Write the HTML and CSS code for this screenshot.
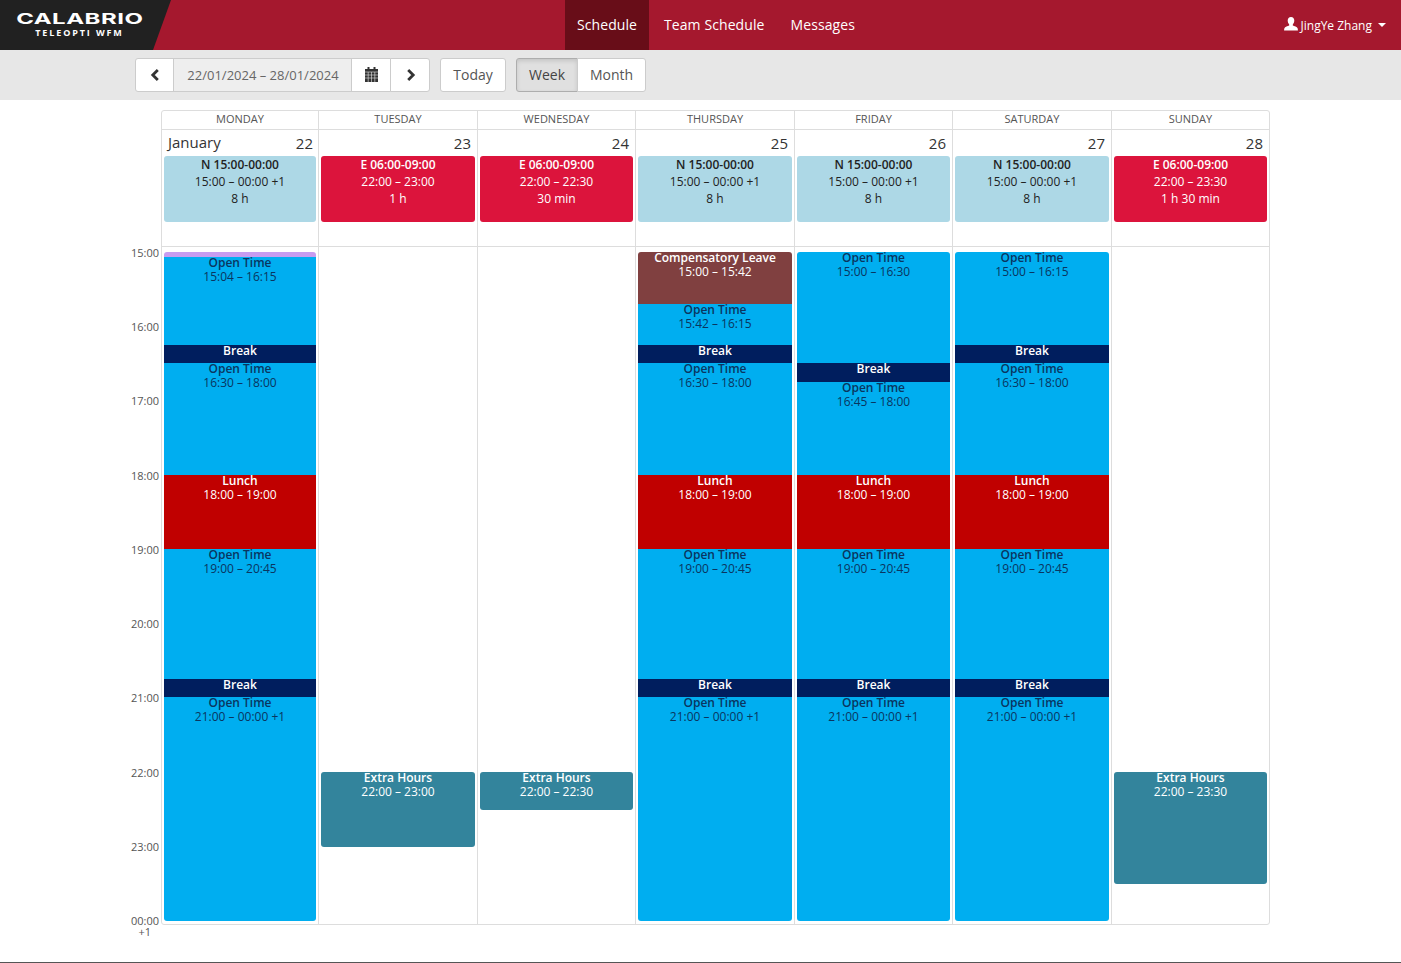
FILE: index.html
```html
<!DOCTYPE html>
<html lang="en">
<head>
<meta charset="utf-8">
<title>Schedule</title>
<link rel="stylesheet" href="styles.css">
</head>
<body>
<header class="navbar">
  <a class="brand"><span class="brand-main">CALABRIO</span><span class="brand-sub">TELEOPTI WFM</span></a>
  <nav class="nav">
    <a class="nav-item active">Schedule</a>
    <a class="nav-item">Team Schedule</a>
    <a class="nav-item">Messages</a>
  </nav>
  <a class="user">
    <svg class="user-icon" viewBox="0 0 14 14"><path d="M7 0C4.900 0 3.700 1.500 3.700 3.600c0 1.500.6 3 1.500 3.800v1.100C3.800 9.300.9 9.800.4 11.200c-.2.700-.3 1.500-.3 2.300h13.800c0-.8-.1-1.600-.3-2.300-.5-1.400-3.400-1.900-4.800-2.700V7.400c.9-.8 1.500-2.300 1.500-3.800C10.300 1.500 9.100 0 7 0z"/></svg>
    <span>JingYe Zhang</span><i class="caret"></i>
  </a>
</header>

<section class="toolbar">
  <div class="btn-group">
    <button class="btn btn-icon first"><svg class="icon" viewBox="0 0 10 12"><path d="M7.800 1 2.800 6l5 5" /></svg></button>
    <span class="btn range">22/01/2024 – 28/01/2024</span>
    <button class="btn btn-icon"><svg class="icon-cal" viewBox="0 0 13 15"><path class="cal-body" d="M2.500 0h2v2h4V0h2v2H13v13H0V2h2.500z"/><path class="cal-lines" d="M0 5h13M0 8h13M0 11h13M3.200 5v10M6.500 5v10M9.800 5v10"/></svg></button>
    <button class="btn btn-icon"><svg class="icon next" viewBox="0 0 10 12"><path d="M2.200 1l5 5-5 5" /></svg></button>
  </div>
  <button class="btn today">Today</button>
  <div class="btn-group">
    <button class="btn pressed">Week</button>
    <button class="btn">Month</button>
  </div>
</section>

<main class="calendar">
  <div class="axis">
    <span class="tick">15:00</span><span class="tick">16:00</span><span class="tick">17:00</span><span class="tick">18:00</span><span class="tick">19:00</span><span class="tick">20:00</span><span class="tick">21:00</span><span class="tick">22:00</span><span class="tick">23:00</span><span class="tick last">00:00<small>+1</small></span>
  </div>
  <div class="table">
    <section class="day">
      <div class="day-head">MONDAY</div>
      <div class="day-date">
        <div class="date-line"><span class="month">January</span><span>22</span></div>
        <div class="shift light"><b>N 15:00-00:00</b><span>15:00 – 00:00 +1</span><span>8 h</span></div>
      </div>
      <div class="day-body"><div class="stack">
        <div class="ev purple" style="height:5px"></div>
        <div class="ev open" style="height:88px"><b>Open Time</b><span>15:04 – 16:15</span></div>
        <div class="ev brk" style="height:18px"><b>Break</b></div>
        <div class="ev open" style="height:112px"><b>Open Time</b><span>16:30 – 18:00</span></div>
        <div class="ev lunch" style="height:74px"><b>Lunch</b><span>18:00 – 19:00</span></div>
        <div class="ev open" style="height:130px"><b>Open Time</b><span>19:00 – 20:45</span></div>
        <div class="ev brk" style="height:18px"><b>Break</b></div>
        <div class="ev open" style="height:224px"><b>Open Time</b><span>21:00 – 00:00 +1</span></div>
      </div></div>
    </section>
    <section class="day">
      <div class="day-head">TUESDAY</div>
      <div class="day-date">
        <div class="date-line end"><span>23</span></div>
        <div class="shift crimson"><b>E 06:00-09:00</b><span>22:00 – 23:00</span><span>1 h</span></div>
      </div>
      <div class="day-body"><div class="stack">
        <div class="gap" style="height:520px"></div>
        <div class="ev extra" style="height:75px"><b>Extra Hours</b><span>22:00 – 23:00</span></div>
      </div></div>
    </section>
    <section class="day">
      <div class="day-head">WEDNESDAY</div>
      <div class="day-date">
        <div class="date-line end"><span>24</span></div>
        <div class="shift crimson"><b>E 06:00-09:00</b><span>22:00 – 22:30</span><span>30 min</span></div>
      </div>
      <div class="day-body"><div class="stack">
        <div class="gap" style="height:520px"></div>
        <div class="ev extra" style="height:38px"><b>Extra Hours</b><span>22:00 – 22:30</span></div>
      </div></div>
    </section>
    <section class="day">
      <div class="day-head">THURSDAY</div>
      <div class="day-date">
        <div class="date-line end"><span>25</span></div>
        <div class="shift light"><b>N 15:00-00:00</b><span>15:00 – 00:00 +1</span><span>8 h</span></div>
      </div>
      <div class="day-body"><div class="stack">
        <div class="ev comp" style="height:52px"><b>Compensatory Leave</b><span>15:00 – 15:42</span></div>
        <div class="ev open" style="height:41px"><b>Open Time</b><span>15:42 – 16:15</span></div>
        <div class="ev brk" style="height:18px"><b>Break</b></div>
        <div class="ev open" style="height:112px"><b>Open Time</b><span>16:30 – 18:00</span></div>
        <div class="ev lunch" style="height:74px"><b>Lunch</b><span>18:00 – 19:00</span></div>
        <div class="ev open" style="height:130px"><b>Open Time</b><span>19:00 – 20:45</span></div>
        <div class="ev brk" style="height:18px"><b>Break</b></div>
        <div class="ev open" style="height:224px"><b>Open Time</b><span>21:00 – 00:00 +1</span></div>
      </div></div>
    </section>
    <section class="day">
      <div class="day-head">FRIDAY</div>
      <div class="day-date">
        <div class="date-line end"><span>26</span></div>
        <div class="shift light"><b>N 15:00-00:00</b><span>15:00 – 00:00 +1</span><span>8 h</span></div>
      </div>
      <div class="day-body"><div class="stack">
        <div class="ev open" style="height:111px"><b>Open Time</b><span>15:00 – 16:30</span></div>
        <div class="ev brk" style="height:19px"><b>Break</b></div>
        <div class="ev open" style="height:93px"><b>Open Time</b><span>16:45 – 18:00</span></div>
        <div class="ev lunch" style="height:74px"><b>Lunch</b><span>18:00 – 19:00</span></div>
        <div class="ev open" style="height:130px"><b>Open Time</b><span>19:00 – 20:45</span></div>
        <div class="ev brk" style="height:18px"><b>Break</b></div>
        <div class="ev open" style="height:224px"><b>Open Time</b><span>21:00 – 00:00 +1</span></div>
      </div></div>
    </section>
    <section class="day">
      <div class="day-head">SATURDAY</div>
      <div class="day-date">
        <div class="date-line end"><span>27</span></div>
        <div class="shift light"><b>N 15:00-00:00</b><span>15:00 – 00:00 +1</span><span>8 h</span></div>
      </div>
      <div class="day-body"><div class="stack">
        <div class="ev open" style="height:93px"><b>Open Time</b><span>15:00 – 16:15</span></div>
        <div class="ev brk" style="height:18px"><b>Break</b></div>
        <div class="ev open" style="height:112px"><b>Open Time</b><span>16:30 – 18:00</span></div>
        <div class="ev lunch" style="height:74px"><b>Lunch</b><span>18:00 – 19:00</span></div>
        <div class="ev open" style="height:130px"><b>Open Time</b><span>19:00 – 20:45</span></div>
        <div class="ev brk" style="height:18px"><b>Break</b></div>
        <div class="ev open" style="height:224px"><b>Open Time</b><span>21:00 – 00:00 +1</span></div>
      </div></div>
    </section>
    <section class="day">
      <div class="day-head">SUNDAY</div>
      <div class="day-date">
        <div class="date-line end"><span>28</span></div>
        <div class="shift crimson"><b>E 06:00-09:00</b><span>22:00 – 23:30</span><span>1 h 30 min</span></div>
      </div>
      <div class="day-body"><div class="stack">
        <div class="gap" style="height:520px"></div>
        <div class="ev extra" style="height:112px"><b>Extra Hours</b><span>22:00 – 23:30</span></div>
      </div></div>
    </section>
  </div>
</main>
<footer class="foot"></footer>
</body>
</html>
```

FILE: styles.css
```css
* { box-sizing: border-box; }
html, body { margin: 0; padding: 0; height: 963px; overflow: hidden; background: #fff; }
body { font-family: "Open Sans", "Liberation Sans", sans-serif; font-size: 12px; color: #333; position: relative; }

.navbar { height: 50px; background: #a5182e; display: flex; align-items: stretch; color: #fff; }
.brand { width: 171px; background: #212121; clip-path: polygon(0 0, 100% 0, 153px 100%, 0 100%); display: flex; flex-direction: column; align-items: center; padding: 11px 12px 0 0; flex: none; }
.brand-main { font-family: Inter, sans-serif; font-weight: 700; font-size: 15px; line-height: 15px; letter-spacing: .3px; transform: scaleX(1.6); }
.brand-sub { font-family: "Open Sans", sans-serif; font-weight: 700; font-size: 9px; line-height: 12px; letter-spacing: 1.88px; margin-top: 1px; }
.nav { display: flex; margin-left: 394px; }
.nav-item { padding: 0 12px 0 14px; line-height: 50px; font-size: 14px; letter-spacing: .09px; }
.nav-item.active { background: #680d18; padding: 0; width: 84px; text-align: center; margin-right: 1px; }
.user { margin-left: auto; padding-right: 15px; display: flex; align-items: center; font-size: 12px; }
.user-icon { width: 14px; height: 14px; fill: #fff; margin: -3px 3px 0 0; }
.caret { display: block; border: 4px solid transparent; border-top-color: #fff; border-bottom: 0; margin-left: 6px; }

.toolbar { height: 50px; background: #e7e7e7; display: flex; align-items: flex-start; gap: 10px; padding: 8px 0 0 135px; }
.btn-group { display: flex; }
.btn { height: 34px; font-family: inherit; font-size: 14px; line-height: 32px; color: #555; background: #fff; border: 1px solid #ccc; border-radius: 3px; padding: 0 12px; margin: 0; display: block; }
.btn-group .btn { border-radius: 0; margin-left: -1px; }
.btn-group .btn:first-child { border-radius: 3px 0 0 3px; margin-left: 0; }
.btn-group .btn:last-child { border-radius: 0 3px 3px 0; }
.btn-icon { width: 40px; padding: 0; display: flex; align-items: center; justify-content: center; }
.btn-group .first { width: 39px; }
.range { background: #eee; font-size: 13px; width: 179px; text-align: center; padding: 0 0 0 1px; color: #666; }
.icon { width: 10px; height: 12px; fill: none; stroke: #333; stroke-width: 2.8; }
.next { margin-left: 1px; }
.icon-cal { width: 13px; height: 15px; margin-top: -1px; }
.cal-body { fill: #333; }
.cal-lines { fill: none; stroke: #e8e8e8; stroke-width: .6; }
.today { width: 66px; padding: 0; text-align: center; }
.pressed { background: #e0e0e0; box-shadow: inset 0 2px 4px rgba(0,0,0,.125); border-color: #adadad; color: #444; }

.calendar { display: flex; align-items: flex-start; margin-top: 10px; }
.axis { width: 161px; flex: none; padding-top: 135.9px; display: flex; flex-direction: column; align-items: flex-end; }
.tick { height: 74.25px; width: 100%; text-align: right; padding-right: 2px; font-size: 11px; line-height: 14px; color: #555; }
.tick small { display: block; font-size: 11px; line-height: 11px; padding-right: 8px; margin-top: -2px; }
.table { display: grid; grid-template-columns: 157px 159px 158px 159px 158px 159px 157px; border: 1px solid #ddd; border-radius: 3px; width: 1109px; flex: none; }
.day { border-right: 1px solid #ddd; }
.day:last-child { border-right: 0; }
.day-head { height: 19px; border-bottom: 1px solid #ddd; text-align: center; font-size: 11px; line-height: 15px; color: #555; }
.day-date { height: 117px; border-bottom: 1px solid #ddd; padding: 0 2px; }
.date-line { height: 26px; display: flex; justify-content: space-between; align-items: center; font-size: 15px; padding: 0 3px 0 4px; line-height: 26px; }
.date-line.end { justify-content: flex-end; padding-right: 4px; }
.month { font-size: 15px; margin-top: -2px; }
.shift { height: 66px; border-radius: 3px; display: flex; flex-direction: column; align-items: center; font-size: 12px; line-height: 17px; }
.shift b { font-weight: 600; }
.light { background: #add8e6; color: #222; }
.crimson { background: #dc143c; color: #fff; }
.day-body { height: 677px; padding: 5px 2px 0; }
.stack { display: flex; flex-direction: column; }
.ev { display: flex; flex-direction: column; align-items: center; font-size: 12px; line-height: 14px; flex: none; }
.ev b { font-weight: 600; margin-top: -1px; }
.ev:first-child { border-radius: 3px 3px 0 0; }
.ev:last-child { border-radius: 0 0 3px 3px; }
.open { background: #00aef0; color: #0a3560; }
.brk { background: #001e5e; color: #fff; }
.lunch { background: #c00000; color: #fff; }
.purple { background: #c79cf0; }
.comp { background: #804040; color: #fff; }
.extra { background: #33849c; color: #fff; border-radius: 3px !important; }
.foot { position: absolute; left: 0; right: 0; top: 962px; height: 1px; background: #555; }
```
